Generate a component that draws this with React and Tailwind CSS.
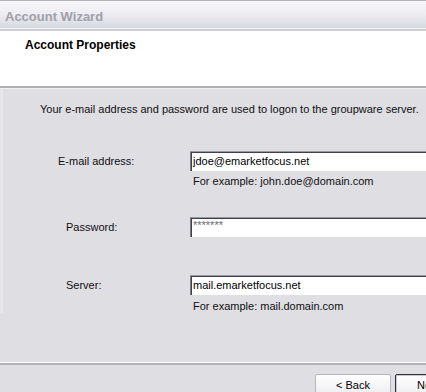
import React from "react";

const Field = ({ label, value, pad, password }) => (
  <div className="flex items-center h-[20px]">
    <div className="w-[187px] shrink-0 text-[11px] leading-[13px] text-[#101010]" style={{ paddingLeft: pad }}>
      {label}
    </div>
    <div className="w-[260px] shrink-0 h-[20px] bg-white border-t border-l border-t-[#9a9aa0] border-l-[#7a7a80] shadow-[inset_1px_1px_0_#404048] flex items-center pl-[2px]">
      {password ? (
        <span className="text-[11px] leading-[13px] text-[#6a6a6a] -mt-[4px]">{value}</span>
      ) : (
        <span className="text-[11px] leading-[13px] text-black">{value}</span>
      )}
    </div>
  </div>
);

export default function App() {
  return (
    <div
      className="w-[426px] h-[392px] overflow-hidden bg-[#dfdee3] flex flex-col"
      style={{ fontFamily: '"Liberation Sans", Arial, sans-serif' }}
    >
      {/* title bar */}
      <div className="h-[28px] shrink-0 border-t border-[#b4b4bc] bg-gradient-to-b from-[#f8f8fb] via-[#ececf1] to-[#d8d8e0] flex items-center pl-[5px] pt-[4px]">
        <span className="text-[13px] leading-[15px] font-bold text-[#a0a0a8]">Account Wizard</span>
      </div>
      <div className="h-[1px] shrink-0 bg-[#f2f2f5]" />
      <div className="h-[2px] shrink-0 bg-[#cfcfd4]" />

      {/* header */}
      <div className="h-[55px] shrink-0 bg-white pl-[25px] pt-[7px]">
        <p className="text-[12px] leading-[14px] font-bold text-black">Account Properties</p>
      </div>
      <div className="h-[2px] shrink-0 bg-[#aeaeb4]" />
      <div className="h-[1px] shrink-0 bg-[#f0f0f3]" />

      {/* body */}
      <div className="flex flex-col border-l-[3px] border-[#e6e6ea]">
        <p className="mt-[14px] pl-[37px] text-[11px] leading-[13px] text-[#101010] whitespace-nowrap">
          Your e-mail address and password are used to logon to the groupware server.
        </p>

        <div className="mt-[35px]">
          <Field label="E-mail address:" value="jdoe@emarketfocus.net" pad="55px" />
        </div>
        <p className="mt-[4px] pl-[190px] text-[11px] leading-[13px] text-[#101010]">
          For example: john.doe@domain.com
        </p>

        <div className="mt-[29px]">
          <Field label="Password:" value="*******" pad="63px" password />
        </div>

        <div className="mt-[38px]">
          <Field label="Server:" value="mail.emarketfocus.net" pad="63px" />
        </div>
        <p className="mt-[5px] pl-[190px] text-[11px] leading-[13px] text-[#101010]">
          For example: mail.domain.com
        </p>
      </div>

      <div className="mt-[49px] h-[1px] shrink-0 bg-white" />
      <div className="h-[2px] shrink-0 bg-[#b2b2b8]" />

      {/* buttons */}
      <div className="mt-[9px] flex pl-[315px] gap-[4px]">
        <button className="w-[76px] h-[23px] shrink-0 rounded-[2px] border border-[#b4b4bc] bg-gradient-to-b from-white to-[#ececf0] text-[11px] text-black flex items-center justify-center">
          &lt; Back
        </button>
        <button className="w-[76px] h-[23px] shrink-0 rounded-[2px] border border-[#303038] shadow-[inset_0_0_0_1px_#c8c8d0] bg-gradient-to-b from-white to-[#ececf0] text-[11px] text-black flex items-center justify-center">
          Next &gt;
        </button>
      </div>
    </div>
  );
}
